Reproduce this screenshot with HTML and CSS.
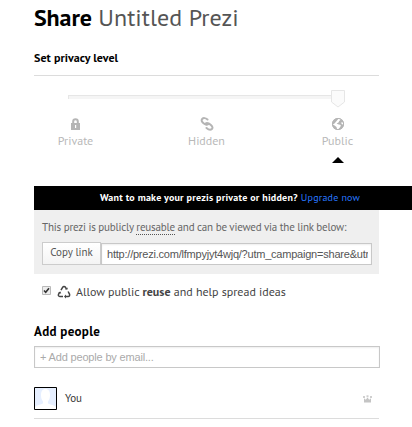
FILE: index.html
```html
<!DOCTYPE html>
<html lang="en">
<head>
    <meta charset="UTF-8">
    <meta name="viewport" content="width=device-width, initial-scale=1.0">
    <title>Share Untitled Prezi</title>
    <link rel="stylesheet" href="styles.css">
</head>
<body>
    <div class="share-dialog">
        <h1><strong>Share</strong> <span class="prezi-title">Untitled Prezi</span></h1>
        <h2 class="privacy-heading">Set privacy level</h2>

        <div class="slider">
            <div class="track"></div>
            <svg class="handle" width="14" height="18" viewBox="0 0 14 18">
                <path d="M.5 .5h13v11.5L7 17 .5 12z" fill="#fbfbfb" stroke="#e6e6e6"/>
            </svg>
        </div>

        <div class="levels">
            <div class="level">
                <svg width="14" height="14" viewBox="0 0 14 14">
                    <path d="M4.200 7V4.500a2.300 2.300 0 0 1 4.600 0V7" fill="none" stroke="#b5b5b5" stroke-width="2"/>
                    <path d="M2 6h9v7H2z" fill="#b5b5b5"/>
                    <path d="M6 8h1.200v3H6z" fill="#fff"/>
                </svg>
                <span>Private</span>
            </div>
            <div class="level">
                <svg width="14" height="14" viewBox="0 0 14 14">
                    <g fill="none" stroke="#b5b5b5" stroke-width="2" stroke-linecap="round">
                        <path d="M7.500 2.500C5.500.8 3.300.7 2.200 2S1.800 4.800 3.500 6.200 7.500 8.500 8.500 6.800"/>
                        <path d="M6.500 11C8.500 12.800 10.700 13.200 11.900 12S12.300 9.200 10.600 7.700 6.500 5.300 5.500 7"/>
                    </g>
                </svg>
                <span>Hidden</span>
            </div>
            <div class="level">
                <svg width="14" height="14" viewBox="0 0 14 14">
                    <circle cx="7" cy="7" r="6" fill="#b5b5b5"/>
                    <path d="M7.500 1.800 9.800 2.500 8.200 4 7.500 5.500 5.600 6.500 7 7.300 9.800 8 9.300 10 7.200 12.200 6 12 5.500 10 3.200 8.200 1.800 7.500 3.500 6.500 5.200 4.500zM10.500 5 12 5.500v2l-1.500-.5z" fill="#fff"/>
                    <circle cx="7" cy="7" r="5.600" fill="none" stroke="#b5b5b5"/>
                </svg>
                <span>Public</span>
                <i class="arrow"></i>
            </div>
        </div>

        <div class="banner">
            <strong>Want to make your prezis private or hidden?</strong>
            <a href="#">Upgrade now</a>
        </div>

        <div class="link-panel">
            <p>This prezi is publicly <span class="reusable">reusable</span> and can be viewed via the link below:</p>
            <div class="link-row">
                <button type="button">Copy link</button>
                <input type="text" class="link-input" value="http://prezi.com/lfmpyjyt4wjq/?utm_campaign=share&amp;utm_medium=copy">
            </div>
        </div>

        <div class="reuse">
            <svg class="check" width="9" height="9" viewBox="0 0 9 9">
                <path d="M.5 .5h8v8h-8z" fill="#ededed" stroke="#b9b9b9"/>
                <path d="M2 4.500 3.700 6.300 7 2.200" fill="none" stroke="#333" stroke-width="1.600"/>
            </svg>
            <svg class="recycle" width="14" height="14" viewBox="0 0 14 14">
                <g fill="none" stroke="#444" stroke-width="1.500">
                    <path d="M4 5.200 5.600 2.300Q6.100 1.500 7 1.500T8.500 2.300L9.500 4"/>
                    <path d="M11.100 6.500 12.500 9.100C13 10.500 12.300 11.500 11.200 11.500H8.500"/>
                    <path d="M6 11.500H2.800C1.500 11.500 1 10.300 1.600 9.200L2.800 7.200"/>
                </g>
                <path d="M8 4.200 10.300 4.800 10.900 2.600zM9 9.500v4L7 11.500zM1.300 7.500 3.500 6.500 4.200 8.700z" fill="#444"/>
            </svg>
            <span>Allow public <b>reuse</b> and help spread ideas</span>
        </div>

        <h2 class="people-heading">Add people</h2>
        <input type="text" class="email-input" placeholder="+ Add people by email...">

        <div class="person">
            <svg class="avatar" width="23" height="23" viewBox="0 0 23 23">
                <path d="M.5 .5h22v22H.5z" fill="#e6efff" stroke="#000"/>
                <path d="M1 22v-2c2-2 5-2.200 7.500-3.300.8-.5.700-1.700.3-2.500C7.500 12.500 7 10.500 7 8c0-3.700 1.500-6 4.500-6S16 4.300 16 8c0 2.500-.5 4.500-1.800 6.200-.4.800-.5 2 .3 2.500C17 17.800 20 18 22 20v2z" fill="#fff"/>
            </svg>
            <span class="name">You</span>
            <svg class="crown" width="9" height="8" viewBox="0 0 9 8">
                <path d="M1 7.500V3.200L2.800 4.800 4.500 2.600 6.200 4.800 8 3.200V7.500z" fill="#c4c4c4"/>
                <path d="M0 1h2v2H0zM3.500 .3h2v2h-2zM7 1h2v2H7z" fill="#cfcfcf"/>
            </svg>
        </div>
    </div>
</body>
</html>
```

FILE: styles.css
```css
* {
    box-sizing: border-box;
}
body {
    margin: 0;
    background: #fff;
    color: #444;
    font-family: "PT Sans", "Noto Sans", sans-serif;
    font-size: 11px;
    overflow: hidden;
}
.share-dialog {
    width: 345px;
    margin-left: 34px;
    white-space: nowrap;
}
h1, h2, p {
    margin: 0;
}
h1 {
    height: 48px;
    padding-top: 2px;
    font-size: 24px;
    line-height: 31px;
    font-weight: normal;
    color: #000;
}
h1 strong {
    letter-spacing: -0.1px;
}
.prezi-title {
    color: #555;
    letter-spacing: 0.05px;
}
.privacy-heading {
    height: 28px;
    border-bottom: 1px solid #dcdcdc;
    font-size: 12px;
    line-height: 20px;
    font-weight: 600;
    color: #000;
    letter-spacing: 0.05px;
}
.slider {
    display: flex;
    height: 32px;
    padding: 14px 0 0 34px;
}
.track {
    width: 263px;
    height: 4px;
    margin-top: 5px;
    border: 1px solid #e6e6e6;
    border-width: 1px 0 0 1px;
    background: #f5f5f5;
}
.levels {
    display: flex;
    height: 78px;
    padding-top: 9px;
    margin-left: -24px;
    color: #b9b9b9;
    font-size: 12px;
}
.level {
    display: flex;
    flex: none;
    flex-direction: column;
    align-items: center;
    width: 131px;
    line-height: 16px;
}
.level svg {
    margin-bottom: 2px;
}
.arrow {
    margin-top: 8px;
    border: 6px solid transparent;
    border-top: 0;
    border-bottom-color: #000;
}
.banner {
    display: flex;
    gap: 3px;
    width: 378px;
    height: 24px;
    padding-left: 66px;
    background: #000;
    color: #fff;
    font-size: 10px;
    line-height: 24px;
    letter-spacing: 0.22px;
}
.banner strong {
    font-weight: 600;
}
.banner a {
    color: #2878ff;
    text-decoration: none;
}
.link-panel {
    height: 64px;
    padding: 8px 7px 0 8px;
    background: #efefef;
    color: #666;
}
.link-panel p {
    height: 24px;
    line-height: 18px;
    letter-spacing: -0.2px;
}
.reusable {
    border-bottom: 1px dotted #555;
}
.link-row {
    display: flex;
    align-items: flex-end;
}
.link-row button {
    width: 59px;
    height: 23px;
    padding: 0 0 3px;
    border: 1px solid #ccc;
    background: linear-gradient(#fff, #f4f4f4);
    color: #555;
    font: inherit;
}
input {
    height: 22px;
    border: 1px solid #c8c8c8;
    border-radius: 0;
    box-shadow: inset 0 1px 2px #eee;
    background: #fff;
    color: #555;
    font: 11px "Liberation Sans", Arial, sans-serif;
}
.link-input {
    width: 271px;
    padding: 0 3px 0 5px;
    letter-spacing: -0.22px;
}
.reuse {
    display: flex;
    height: 47px;
    padding: 10px 0 0 8px;
    font-size: 12px;
    line-height: 16px;
}
.check {
    margin-top: 2px;
}
.recycle {
    margin: 1px 5px 0 6px;
}
.reuse b {
    font-weight: 600;
}
.people-heading {
    height: 25px;
    font-size: 13px;
    line-height: 22px;
    font-weight: bold;
    color: #000;
    letter-spacing: 0.3px;
}
.email-input {
    display: block;
    width: 346px;
    padding: 0 5px;
    letter-spacing: -0.17px;
}
.email-input::placeholder {
    color: #aaa;
}
.person {
    display: flex;
    align-items: center;
    height: 51px;
    padding: 11px 7px 0 0;
    border-bottom: 1px solid #dcdcdc;
}
.name {
    margin: -2px auto 0 8px;
    color: #333;
}
```
